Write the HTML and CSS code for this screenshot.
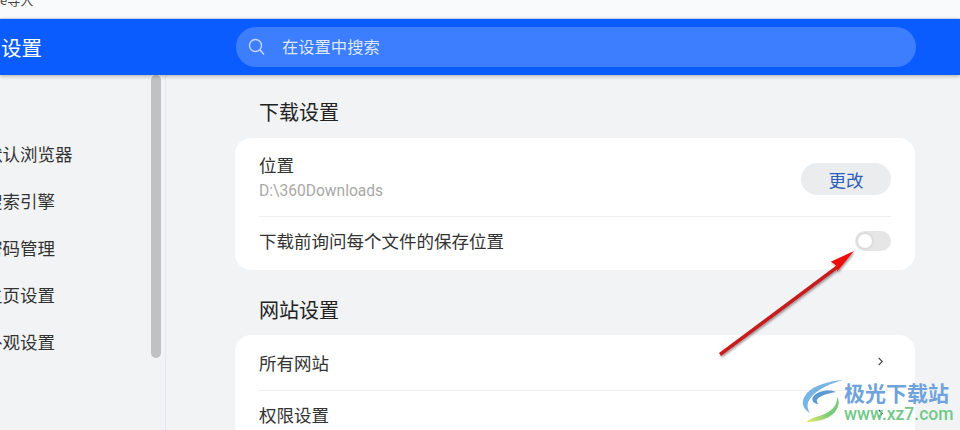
FILE: index.html
```html
<!DOCTYPE html>
<html lang="zh-CN">
<head>
    <meta charset="UTF-8">
    <title>设置</title>
    <link rel="stylesheet" href="styles.css">
</head>
<body>
    <div class="topbar"><span class="topbar-text">e导入</span></div>

    <header class="header">
        <div class="header-title">设置</div>
        <div class="search">
            <svg class="search-icon" width="18" height="18" viewBox="0 0 18 18" fill="none" stroke="currentColor" stroke-width="1.4">
                <circle cx="7.5" cy="7.5" r="6"/>
                <path d="M12 12L15.6 16" stroke-linecap="round"/>
            </svg>
            <span>在设置中搜索</span>
        </div>
    </header>

    <div class="main">
        <nav class="sidebar">
            <div class="nav-item">默认浏览器</div>
            <div class="nav-item">搜索引擎</div>
            <div class="nav-item">密码管理</div>
            <div class="nav-item">主页设置</div>
            <div class="nav-item">外观设置</div>
            <div class="scrollbar"></div>
        </nav>

        <section class="content">
            <h2 class="section-title">下载设置</h2>
            <div class="card">
                <div class="row row-location">
                    <div>
                        <div class="row-label">位置</div>
                        <div class="row-sub">D:\360Downloads</div>
                    </div>
                    <button class="change-btn">更改</button>
                </div>
                <div class="row row-ask">
                    <div class="row-label">下载前询问每个文件的保存位置</div>
                    <div class="toggle"><div class="knob"></div></div>
                </div>
            </div>

            <h2 class="section-title section-sites">网站设置</h2>
            <div class="card">
                <div class="row row-link">
                    <div class="row-label">所有网站</div>
                    <svg class="chevron" width="5" height="9" viewBox="0 0 5 9" fill="none" stroke="#444" stroke-width="1.2"><path d="M.7 .8l3.5 3.7-3.5 3.7"/></svg>
                </div>
                <div class="row row-link">
                    <div class="row-label">权限设置</div>
                    <svg class="chevron" width="5" height="9" viewBox="0 0 5 9" fill="none" stroke="#444" stroke-width="1.2"><path d="M.7 .8l3.5 3.7-3.5 3.7"/></svg>
                </div>
            </div>
        </section>
    </div>

    <!-- red annotation arrow -->
    <svg class="arrow" width="150" height="120" viewBox="0 0 150 120">
        <defs>
            <filter id="arrowShadow" x="-20%" y="-20%" width="140%" height="140%">
                <feDropShadow dx="1" dy="1.5" stdDeviation="1.2" flood-color="#000" flood-opacity="0.4"/>
            </filter>
        </defs>
        <g filter="url(#arrowShadow)">
            <path d="M122 15L4 103L6 106L124 18Z" fill="#c81e1e"/>
            <path d="M139 1L115.7 11.7L120 14.5L122.5 18L122 21.7Z" fill="#ee1010"/>
        </g>
    </svg>

    <!-- watermark -->
    <div class="watermark">
        <svg class="wm-logo" width="44" height="44" viewBox="0 0 44 44" fill="none">
            <defs>
                <linearGradient id="wmGreen" x1="1" y1="0" x2="0" y2="1">
                    <stop offset="0.5" stop-color="#6cc56e"/>
                    <stop offset="1" stop-color="#ece85c"/>
                </linearGradient>
            </defs>
            <path d="M43 0C30 1 14 5 7 13C1 20 1 28 10 33C6 27 7 21 13 15C20 8 32 3 43 0Z" fill="#68aee2"/>
            <path d="M36 12C28 9 17 11 13 17C11 21 14 24 19 24C16 22 16 19 20 17C25 14 31 13 36 12Z" fill="#4a8fcf"/>
            <path d="M37 17C38 25 31 32 22 35C16 37 11 38 6 42C16 42 28 40 35 32C39 27 40 21 37 17Z" fill="url(#wmGreen)"/>
        </svg>
        <div class="wm-text">
            <div class="wm-name">极光下载站</div>
            <div class="wm-url">www.xz7.com</div>
        </div>
    </div>
</body>
</html>
```

FILE: styles.css
```css
:root {
    --bg-color: #f2f3f5;
    --blue: #0b5cff;
    --text-color: #2b2b2b;
    --line-color: #eeeff1;
    --cjk: "Noto Sans CJK SC", "Liberation Sans", sans-serif;
}

html, body {
    margin: 0;
    height: 430px;
    overflow: hidden;
}

body {
    position: relative;
    font-family: var(--cjk);
    background-color: var(--bg-color);
    color: var(--text-color);
}

.topbar {
    height: 18px;
    background-color: #f9fafc;
    border-bottom: 1px solid #d5e3f3;
    overflow: hidden;
}

.topbar-text {
    display: block;
    margin-top: -9px;
    font-size: 13px;
    line-height: 18px;
    color: #444;
}

.header {
    height: 56px;
    display: flex;
    align-items: center;
    background-color: var(--blue);
    box-shadow: 0 1px 4px rgba(0, 0, 0, 0.3);
    position: relative;
    z-index: 1;
}

.header-title {
    width: 236px;
    padding-left: 1px;
    box-sizing: border-box;
    font-size: 20.5px;
    line-height: 28px;
    color: #fff;
}

.search {
    width: 680px;
    height: 40px;
    display: flex;
    align-items: center;
    gap: 16px;
    padding-left: 12px;
    box-sizing: border-box;
    background-color: #3d7dff;
    border-radius: 20px;
    color: #dce8ff;
    font-size: 16.3px;
}

.search span {
    margin-bottom: 2px;
}

.search-icon {
    color: #c5d8ff;
}

.main {
    display: flex;
    height: 356px;
}

.sidebar {
    position: relative;
    width: 165px;
    padding-top: 55px;
    border-right: 1px solid #e6e7ea;
    flex-shrink: 0;
    overflow: hidden;
}

.nav-item {
    height: 47px;
    line-height: 47px;
    margin-left: -15px;
    font-size: 17.5px;
    color: #333;
    white-space: nowrap;
}

.scrollbar {
    position: absolute;
    left: 151px;
    top: 0;
    width: 10px;
    height: 283px;
    background-color: #c0c1c3;
    border-radius: 5px;
}

.content {
    padding-left: 69px;
    width: 680px;
}

.section-title {
    margin: 0;
    padding-left: 24px;
    font-size: 20px;
    font-weight: 400;
    line-height: 26px;
    padding-top: 24px;
    padding-bottom: 13px;
    color: #222;
}

.section-sites {
    padding-top: 27px;
    padding-bottom: 12px;
}

.card {
    background-color: #fff;
    border-radius: 16px;
    padding: 0 24px;
}

.row {
    display: flex;
    align-items: center;
    justify-content: space-between;
}

.row + .row {
    border-top: 1px solid var(--line-color);
}

.row-location {
    height: 78px;
}

.row-ask {
    height: 48px;
    padding-bottom: 5px;
}

.row-link {
    height: 55px;
}

.row-link + .row-link {
    height: 47px;
    padding-bottom: 8px;
}

.row-link .chevron {
    margin-bottom: 2px;
}

.row-label {
    font-size: 17.5px;
    line-height: 24px;
    color: #333;
}

.row-sub {
    font-family: Roboto, "Liberation Sans", sans-serif;
    font-size: 15.6px;
    line-height: 20px;
    margin-top: 4px;
    color: #a9a9a9;
}

.change-btn {
    width: 90px;
    height: 32px;
    margin-top: 4px;
    padding: 0;
    border: none;
    border-radius: 16px;
    background-color: #ebecee;
    color: #2c5fb8;
    font-family: var(--cjk);
    font-size: 17.5px;
}

.toggle {
    width: 36px;
    height: 20px;
    background-color: #e6e6e6;
    border-radius: 10px;
}

.knob {
    width: 14px;
    height: 14px;
    margin: 1px;
    background-color: #fff;
    border: 2px solid #dcdcdc;
    border-radius: 50%;
}

.chevron {
    margin-right: 8px;
}

.arrow {
    position: absolute;
    left: 715px;
    top: 250px;
}

.watermark {
    position: absolute;
    left: 800px;
    top: 380px;
    display: flex;
    gap: 0;
}

.wm-logo {
    opacity: 0.9;
}

.wm-name {
    font-size: 21px;
    font-weight: 700;
    line-height: 24px;
    color: #6ea3dc;
}

.wm-url {
    font-family: Roboto, "Liberation Sans", sans-serif;
    font-size: 17.5px;
    line-height: 20px;
    font-weight: 500;
    color: #72c98a;
}
```
